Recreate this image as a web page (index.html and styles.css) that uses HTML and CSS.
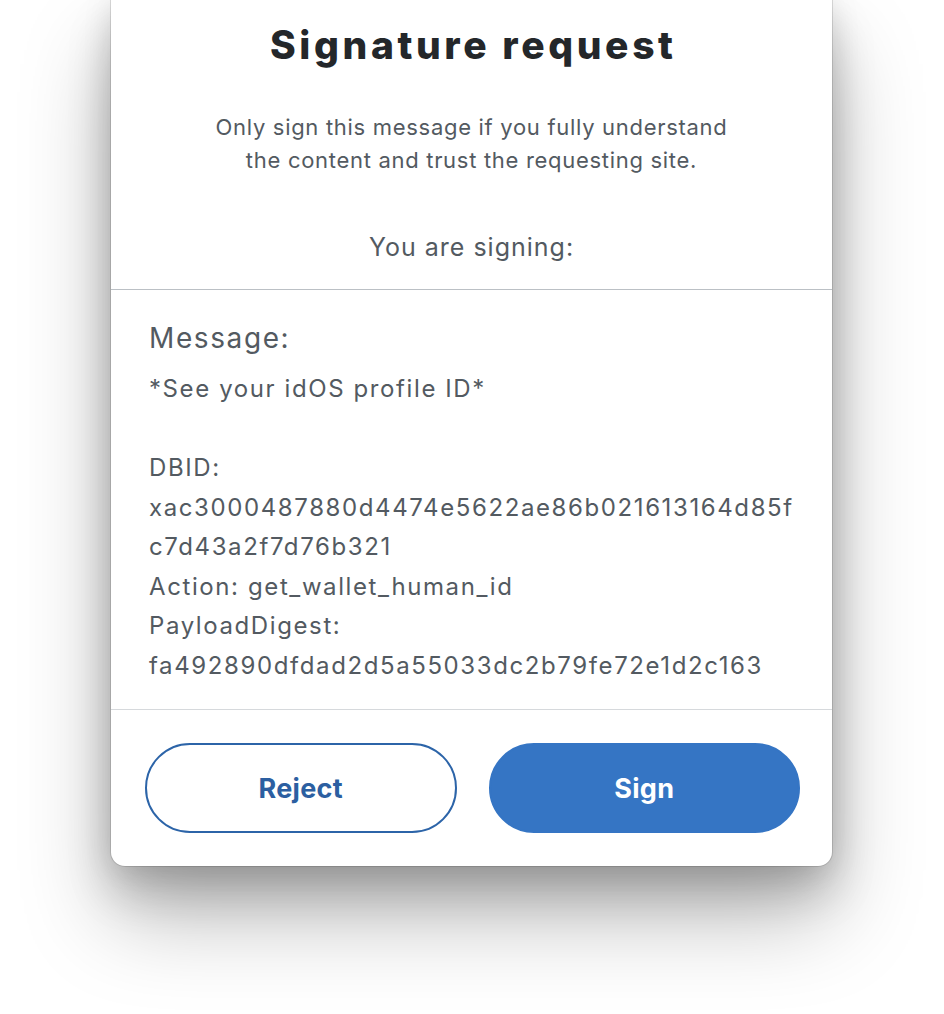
FILE: index.html
```html
<!DOCTYPE html>
<html lang="en">
<head>
<meta charset="utf-8">
<title>Signature request</title>
<link rel="stylesheet" href="styles.css">
</head>
<body>
<div class="stage">
  <div class="card">
    <header class="head">
      <h1 class="title">Signature request</h1>
      <p class="notice">Only sign this message if you fully understand<br>the content and trust the requesting site.</p>
      <p class="signing">You are signing:</p>
    </header>
    <section class="message">
      <h2 class="msg-label">Message:</h2>
      <div class="msg-body">
        <div class="line">*See your idOS profile ID*</div>
        <div class="line blank">&nbsp;</div>
        <div class="line">DBID:</div>
        <div class="line">xac3000487880d4474e5622ae86b021613164d85f</div>
        <div class="line">c7d43a2f7d76b321</div>
        <div class="line">Action: get_wallet_human_id</div>
        <div class="line">PayloadDigest:</div>
        <div class="line">fa492890dfdad2d5a55033dc2b79fe72e1d2c163</div>
      </div>
    </section>
    <footer class="actions">
      <button class="btn btn-reject" type="button">Reject</button>
      <button class="btn btn-sign" type="button">Sign</button>
    </footer>
  </div>
</div>
</body>
</html>
```

FILE: styles.css
```css
html, body {
  margin: 0;
  padding: 0;
  background: #ffffff;
  overflow: hidden;
}

body {
  font-family: "Inter", "Noto Sans", sans-serif;
  color: #535a61;
}

.stage {
  width: 944px;
  height: 1014px;
  display: flex;
  justify-content: center;
}

.card {
  width: 721px;
  height: 866px;
  margin-left: -1px;
  box-sizing: border-box;
  background: #ffffff;
  border-radius: 0 0 14px 14px;
  box-shadow: 0 0 0 1px rgba(0, 0, 0, 0.12), 0 0 30px rgba(0, 0, 0, 0.10), 0 25px 45px rgba(0, 0, 0, 0.18), 0 50px 90px rgba(0, 0, 0, 0.28);
  display: flex;
  flex-direction: column;
}

.head {
  height: 290px;
  box-sizing: border-box;
  border-bottom: 1px solid #bbc0c5;
  display: flex;
  flex-direction: column;
  align-items: center;
  text-align: center;
}

.title {
  margin: 19px 0 0;
  font-size: 39px;
  line-height: 52px;
  font-weight: 800;
  letter-spacing: 3.6px;
  text-indent: 3.6px;
  color: #24272a;
}

.notice {
  margin: 40px 0 0;
  font-size: 22px;
  line-height: 33px;
  letter-spacing: 0.7px;
  color: #535a61;
}

.signing {
  margin: 55px 0 0;
  font-size: 25px;
  line-height: 30px;
  letter-spacing: 1px;
  color: #535a61;
}

.message {
  height: 420px;
  box-sizing: border-box;
  border-bottom: 1px solid #d6d9dc;
  padding: 31px 38px 0 38px;
}

.msg-label {
  margin: 0;
  font-size: 28px;
  line-height: 34px;
  font-weight: 400;
  letter-spacing: 1.6px;
  color: #535a61;
}

.msg-body {
  margin-top: 14px;
  font-size: 24px;
  line-height: 39.5px;
  letter-spacing: 1.6px;
}

.actions {
  display: flex;
  gap: 32px;
  padding: 33px 32px 0 34px;
}

.btn {
  flex: 1;
  height: 90px;
  border-radius: 45px;
  font-family: "Inter", "Noto Sans", sans-serif;
  font-size: 27px;
  font-weight: 700;
  letter-spacing: 0.3px;
  cursor: pointer;
}

.btn-reject {
  background: #ffffff;
  border: 2px solid #2c64a8;
  color: #2c5fa1;
}

.btn-sign {
  background: #3575c4;
  border: 2px solid #3575c4;
  color: #ffffff;
}
```
